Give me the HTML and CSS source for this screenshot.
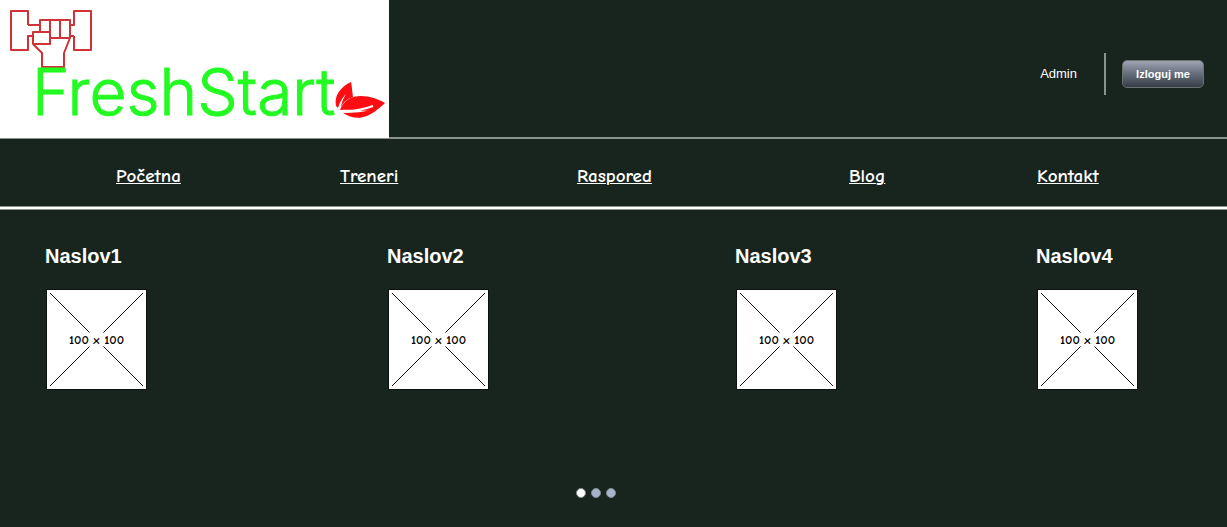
FILE: index.html
```html
<!DOCTYPE html>
<html lang="sr-Latn">
<head>
<meta charset="utf-8">
<meta name="viewport" content="width=device-width, initial-scale=1">
<title>FreshStart</title>
<link rel="stylesheet" href="styles.css">
</head>
<body>
<header class="header">
  <svg class="logo" viewBox="0 0 389 138" role="img" aria-label="FreshStart">
    <g class="logo-hand">
      <path d="M28 25V11H11V50H28V36H33M28 25H40M74 36V50H91V11H74V25H70M70 36H74"/>
      <path d="M40 32V20H70V38H50M50 20V38M60 20V38M33 32H50V44H33ZM33 44L42 53V67H64V53L70 38"/>
    </g>
    <text class="logo-text" x="32" y="115">FreshStart</text>
    <g class="logo-leaf">
      <path d="M351 82C340 87 334 96 336 106L338 108C340 102 342 98 346 94C343 99 341 104 341 107C344 101 349 98 353 97C352 91 352 86 351 82Z"/>
      <path d="M340 110C344 100 351 96 361 96C370 96 378 99 385 103C381 107 377 110 373 111C363 111 353 109 340 110Z"/>
      <path d="M343 113C354 113 364 112 374 109L380 107C368 119 355 121 343 113Z"/>
      <path class="logo-vein" d="M341 111C353 112 362 110 373 106"/>
    </g>
  </svg>
  <div class="account">
    <span class="user">Admin</span>
    <div class="logout-box"><button class="logout" type="button">Izloguj me</button></div>
  </div>
</header>
<nav class="nav">
  <a href="#pocetna">Početna</a>
  <a href="#treneri">Treneri</a>
  <a href="#raspored">Raspored</a>
  <a href="#blog">Blog</a>
  <a href="#kontakt">Kontakt</a>
</nav>
<main class="main">
  <div class="cards">
    <article class="card">
      <h2>Naslov1</h2>
      <svg class="thumb" viewBox="0 0 100 100"><path d="M3 3L43 43M57 43L97 3M3 97L43 57M57 57L97 97"/><text x="50" y="55">100 x 100</text></svg>
    </article>
    <article class="card">
      <h2>Naslov2</h2>
      <svg class="thumb" viewBox="0 0 100 100"><path d="M3 3L43 43M57 43L97 3M3 97L43 57M57 57L97 97"/><text x="50" y="55">100 x 100</text></svg>
    </article>
    <article class="card">
      <h2>Naslov3</h2>
      <svg class="thumb" viewBox="0 0 100 100"><path d="M3 3L43 43M57 43L97 3M3 97L43 57M57 57L97 97"/><text x="50" y="55">100 x 100</text></svg>
    </article>
    <article class="card">
      <h2>Naslov4</h2>
      <svg class="thumb" viewBox="0 0 100 100"><path d="M3 3L43 43M57 43L97 3M3 97L43 57M57 57L97 97"/><text x="50" y="55">100 x 100</text></svg>
    </article>
  </div>
  <div class="dots">
    <button class="dot dot-active" type="button" aria-label="1"></button>
    <button class="dot" type="button" aria-label="2"></button>
    <button class="dot" type="button" aria-label="3"></button>
  </div>
</main>
</body>
</html>
```
FILE: styles.css
```css
* {
  box-sizing: border-box;
}

body {
  margin: 0;
  min-height: 100vh;
  display: flex;
  flex-direction: column;
  background: #17251e;
  color: #fff;
  font-family: "Liberation Sans", Arial, sans-serif;
}

.header {
  display: flex;
  justify-content: space-between;
  background: linear-gradient(#8a948e, #8a948e) bottom / 100% 2px no-repeat;
  padding-bottom: 1px;
}

.logo {
  display: block;
  width: 389px;
  height: 138px;
  background: #fff;
}

.logo-hand {
  fill: none;
  stroke: #cf3338;
  stroke-width: 2;
  stroke-linejoin: round;
}

.logo-text {
  fill: #22fa22;
  stroke: #22fa22;
  stroke-width: 1;
  font-family: Inter, Lato, sans-serif;
  font-size: 64px;
  font-weight: 300;
}

.logo-leaf {
  fill: #fb0d12;
}

.logo-vein {
  fill: none;
  stroke: #fff;
  stroke-width: 2;
}

.account {
  display: flex;
  align-items: center;
  gap: 27px;
  padding: 9px 23px 0 0;
}

.user {
  font-size: 13px;
}

.logout-box {
  display: flex;
  align-items: center;
  height: 42px;
  padding-left: 16px;
  border-left: 2px solid #8a948e;
}

.logout {
  width: 82px;
  height: 28px;
  padding: 0;
  border: 1px solid #6a7370;
  border-radius: 5px;
  background: linear-gradient(#a3a9b8, #6b7280 45%, #323b42) border-box;
  color: #fff;
  font: bold 11px "Liberation Sans", Arial, sans-serif;
}

.nav {
  display: grid;
  grid-template-columns: 224fr 237fr 272fr 188fr 190fr;
  padding: 25px 0 21px 116px;
  border-bottom: 1px solid #8a948e;
  box-shadow: inset 0 -2px #fff, inset 0 -3px #8a948e;
}

.nav a {
  justify-self: start;
  color: #fff;
  font: bold 19px/24px "Comic Sans MS", "Comic Neue", Lato, sans-serif;
  text-decoration-thickness: 1px;
}

.main {
  flex: 1;
  display: flex;
  flex-direction: column;
  justify-content: space-between;
  padding: 34px 0 29px;
}

.cards {
  display: grid;
  grid-template-columns: 342fr 348fr 301fr 191fr;
  padding-left: 45px;
}

.card h2 {
  margin: 0 0 21px;
  font-size: 20px;
  line-height: 24px;
}

.thumb {
  display: block;
  width: 101px;
  height: 101px;
  margin-left: 1px;
  background: #fff;
  border: 1px solid #0b120e;
}

.thumb path {
  stroke: #111;
  stroke-width: 1;
}

.thumb text {
  fill: #000;
  font: bold 13px "Comic Sans MS", "Comic Neue", Lato, sans-serif;
  text-anchor: middle;
}

.dots {
  display: flex;
  justify-content: center;
  gap: 5px;
  padding-right: 35px;
}

.dot {
  width: 10px;
  height: 10px;
  padding: 0;
  border: 1px solid #7f8c93;
  border-radius: 50%;
  background: #a6b3ca;
}

.dot-active {
  background: #fff;
}
```
